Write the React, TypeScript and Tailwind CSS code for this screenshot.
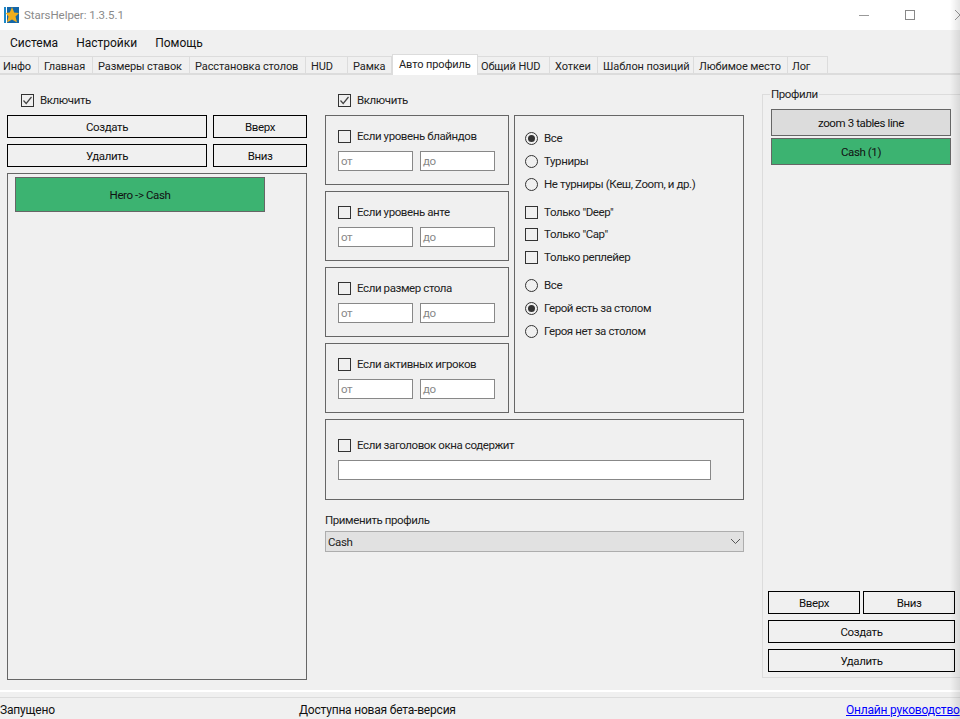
const FONT = "font-['Roboto','Noto_Sans',sans-serif]";
const TXT = "text-[11.5px] tracking-[-0.4px]";

function Btn({ label, w, mt = "" }: { label: string; w: string; mt?: string }) {
  return (
    <div className={`${w} ${mt} h-[23px] pt-[2px] border border-black flex items-center justify-center ${TXT} text-[#111]`}>
      {label}
    </div>
  );
}

function Check({ checked = false }: { checked?: boolean }) {
  return (
    <div className="w-[13px] h-[13px] border border-[#333] bg-[#f0f0f0] flex items-center justify-center shrink-0">
      {checked && (
        <svg width="11" height="11" viewBox="0 0 11 11">
          <path d="M1.5 5.5 L4.2 8.5 L9.5 2" fill="none" stroke="#444" strokeWidth="1.2" />
        </svg>
      )}
    </div>
  );
}

function CheckRow({ label, checked, cls = "" }: { label: string; checked?: boolean; cls?: string }) {
  return (
    <div className={`flex items-center gap-[6px] h-[14px] ${TXT} text-[#222] whitespace-nowrap ${cls}`}>
      <Check checked={checked} />
      <span className="pt-[2px]">{label}</span>
    </div>
  );
}

function RadioRow({ label, checked, cls = "" }: { label: string; checked?: boolean; cls?: string }) {
  return (
    <div className={`flex items-center gap-[6px] h-[14px] ${TXT} text-[#222] whitespace-nowrap ${cls}`}>
      <div className="w-[13px] h-[13px] rounded-full border border-[#333] bg-[#f0f0f0] flex items-center justify-center shrink-0">
        {checked && <div className="w-[7px] h-[7px] rounded-full bg-[#333]" />}
      </div>
      <span className="pt-[2px]">{label}</span>
    </div>
  );
}

function RangeBox({ label, cls = "" }: { label: string; cls?: string }) {
  return (
    <div className={`w-[184px] h-[70px] border border-[#666] px-[12px] pt-[13px] ${cls}`}>
      <CheckRow label={label} />
      <div className="flex gap-[7px] mt-[8px]">
        <div className={`w-[75px] h-[20px] bg-white border border-[#888] ${TXT} text-[#888] pl-[2px] leading-[18px]`}>от</div>
        <div className={`w-[75px] h-[20px] bg-white border border-[#888] ${TXT} text-[#888] pl-[2px] leading-[18px]`}>до</div>
      </div>
    </div>
  );
}

const tabs: [string, number, string][] = [
  ["Инфо", 39, "pl-[3px]"],
  ["Главная", 54, "pl-[5px]"],
  ["Размеры ставок", 97, "pl-[5px]"],
  ["Расстановка столов", 116, "pl-[5px]"],
  ["HUD", 42, "pl-[5px]"],
  ["Рамка", 44, "pl-[5px]"],
  ["Авто профиль", 86, "pl-[6px]"],
  ["Общий HUD", 72, "pl-[3px]"],
  ["Хоткеи", 48, "pl-[5px]"],
  ["Шаблон позиций", 96, "pl-[5px]"],
  ["Любимое место", 94, "pl-[5px]"],
  ["Лог", 40, "pl-[4px]"],
];

export default function App() {
  return (
    <div className={`relative w-[960px] h-[719px] overflow-hidden bg-[#f0f0f0] flex flex-col text-[#111] ${FONT}`}>
      {/* title bar */}
      <div className="h-[30px] bg-white flex items-center shrink-0">
        <svg className="ml-[4px]" width="15" height="18" viewBox="0 0 15 18">
          <rect x="0" y="1" width="2" height="16" fill="#1b87c9" />
          <rect x="3" y="1" width="12" height="16" fill="#1467a8" />
          <path d="M8 1 L10.2 6.5 L15 7 L11.5 10.5 L13 16.5 L8 13.5 L3 16.5 L4.5 10.5 L1.5 7 L5.8 6.5 Z" fill="#f2ae1c" />
        </svg>
        <span className="ml-[5px] pt-[2px] text-[11.5px] text-[#8a8a8a] tracking-[-0.05px]">StarsHelper: 1.3.5.1</span>
        <div className="ml-auto flex items-center">
          <div className="w-[10px] h-px bg-[#999] mr-[36px]" />
          <div className="w-[10px] h-[10px] border border-[#888] mr-[40px]" />
          <svg width="5" height="10" viewBox="0 0 5 10">
            <path d="M0 0 L10 10 M0 10 L10 0" stroke="#999" strokeWidth="1" />
          </svg>
        </div>
      </div>

      {/* menu */}
      <div className="h-[25px] flex items-center text-[12px] text-[#111] shrink-0 pl-[10px] gap-[18px]">
        <span>Система</span>
        <span>Настройки</span>
        <span>Помощь</span>
      </div>

      {/* tabs */}
      <div className="h-[20px] flex shrink-0 border-b-2 border-[#dcdcdc]">
        {tabs.map(([t, w, pad]) => {
          const active = t === "Авто профиль";
          return (
            <div
              key={t}
              style={{ width: w }}
              className={
                active
                  ? `h-[21px] -mt-[1px] pt-[1px] bg-white border border-b-0 border-[#dcdcdc] text-[11px] tracking-[-0.1px] text-[#222] flex items-center whitespace-nowrap relative ${pad}`
                  : `h-[19px] mt-[1px] pt-[2px] border-t border-r border-[#dcdcdc] text-[11px] tracking-[-0.1px] text-[#222] flex items-center whitespace-nowrap ${pad}`
              }
            >
              {t}
            </div>
          );
        })}
      </div>

      {/* body */}
      <div className="flex-1 flex min-h-0">
        {/* left */}
        <div className="w-[300px] ml-[7px] flex flex-col shrink-0">
          <CheckRow label="Включить" checked cls="ml-[14px] mt-[18px]" />
          <div className="flex gap-[6px] mt-[8px]">
            <Btn label="Создать" w="w-[200px]" />
            <Btn label="Вверх" w="w-[94px]" />
          </div>
          <div className="flex gap-[6px] mt-[6px]">
            <Btn label="Удалить" w="w-[200px]" />
            <Btn label="Вниз" w="w-[94px]" />
          </div>
          <div className="h-[507px] mt-[6px] border border-[#666] pl-[7px] pt-[3px]">
            <div className={`w-[250px] h-[35px] pt-[2px] bg-[#3cb371] border border-[#666] flex items-center justify-center ${TXT} text-[#111]`}>
              Hero -&gt; Cash
            </div>
          </div>
        </div>

        {/* middle */}
        <div className="w-[419px] ml-[18px] flex flex-col shrink-0">
          <CheckRow label="Включить" checked cls="ml-[13px] mt-[18px]" />
          <div className="flex gap-[5px] mt-[8px]">
            <div className="flex flex-col gap-[6px]">
              <RangeBox label="Если уровень блайндов" />
              <RangeBox label="Если уровень анте" />
              <RangeBox label="Если размер стола" />
              <RangeBox label="Если активных игроков" />
            </div>
            <div className="w-[230px] h-[298px] border border-[#666] pl-[10px] pt-[15px]">
              <RadioRow label="Все" checked />
              <RadioRow label="Турниры" cls="mt-[9px]" />
              <RadioRow label="Не турниры (Кеш, Zoom, и др.)" cls="mt-[9px]" />
              <CheckRow label="Только &quot;Deep&quot;" cls="mt-[14px]" />
              <CheckRow label="Только &quot;Cap&quot;" cls="mt-[8px]" />
              <CheckRow label="Только реплейер" cls="mt-[9px]" />
              <RadioRow label="Все" cls="mt-[14px]" />
              <RadioRow label="Герой есть за столом" checked cls="mt-[9px]" />
              <RadioRow label="Героя нет за столом" cls="mt-[9px]" />
            </div>
          </div>
          <div className="h-[81px] mt-[6px] border border-[#666] pl-[12px] pt-[18px]">
            <CheckRow label="Если заголовок окна содержит" />
            <div className="w-[373px] h-[20px] mt-[8px] bg-white border border-[#888]" />
          </div>
          <div className={`${TXT} text-[#222] mt-[11px] h-[18px] leading-[18px]`}>Применить профиль</div>
          <div className={`h-[21px] mt-[2px] bg-[#e1e1e1] border border-[#adadad] flex items-center pl-[2px] pr-[2px] justify-between ${TXT} text-[#222]`}>
            <span className="pt-[2px]">Cash</span>
            <svg width="11" height="7" viewBox="0 0 11 7">
              <path d="M1 1 L5.5 5.5 L10 1" fill="none" stroke="#555" strokeWidth="1" />
            </svg>
          </div>
        </div>

        {/* right */}
        <fieldset className="w-[198px] h-[592px] ml-[18px] mt-[11px] border border-r-0 border-[#dcdcdc] flex flex-col shrink-0 pl-[8px]">
          <legend className={`${TXT} text-[#222] px-[1px] leading-[16px] ml-[-1px]`}>Профили</legend>
          <div className={`w-[180px] h-[27px] mt-[7px] pt-[2px] bg-[#dcdcdc] border border-[#666] flex items-center justify-center ${TXT} text-[#111]`}>zoom 3 tables line</div>
          <div className={`w-[180px] h-[27px] mt-[2px] pt-[2px] bg-[#3cb371] border border-[#666] flex items-center justify-center ${TXT} text-[#111]`}>Cash (1)</div>
          <div className="-ml-[3px] mt-auto mb-[5px] flex flex-col gap-[6px]">
            <div className="flex gap-[3px]">
              <Btn label="Вверх" w="w-[92px]" />
              <Btn label="Вниз" w="w-[92px]" />
            </div>
            <Btn label="Создать" w="w-[187px]" />
            <Btn label="Удалить" w="w-[187px]" />
          </div>
        </fieldset>
      </div>

      {/* status */}
      <div className="h-[29px] shrink-0 flex flex-col">
        <div className="h-[2px] bg-white shrink-0" />
        <div className="h-[6px] shrink-0 border-b border-[#dcdcdc]" />
        <div className="flex-1 flex items-center pt-[3px] text-[12px] tracking-[-0.2px] text-[#111] whitespace-nowrap">
          <span className="w-[299px] shrink-0">Запущено</span>
          <span className="w-[547px] shrink-0">Доступна новая бета-версия</span>
          <span className="shrink-0 text-[#0000ff] underline">Онлайн руководство</span>
        </div>
      </div>

      {/* window shadow at right edge */}
      <div className="absolute top-0 right-0 bottom-0 w-[10px] pointer-events-none bg-linear-to-r from-transparent to-black/10" />
    </div>
  );
}
